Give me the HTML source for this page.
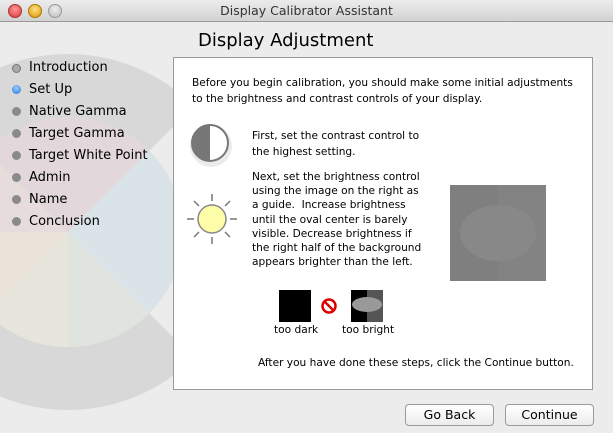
<!DOCTYPE html>
<html><head><style>
body{margin:0;width:613px;height:433px;overflow:hidden;background:#ececec;font-family:"DejaVu Sans","Liberation Sans",sans-serif;position:relative;color:#000}
.t{position:absolute;white-space:nowrap;font-size:10.6px;line-height:16px}
.nav{position:absolute;left:29px;font-size:13px;white-space:nowrap}
.dot{position:absolute;left:12px;width:9px;height:9px;border-radius:50%;background:#8a8a8a}
.btn{position:absolute;top:404px;height:20px;border:1px solid #9a9a9a;border-radius:4px;background:linear-gradient(#fff,#ececec);font-size:12.5px;text-align:center;line-height:20px}
</style></head><body>
<div style="position:absolute;left:0;top:0;width:613px;height:21px;background:linear-gradient(#ececec,#d2d2d2);border-bottom:1px solid #999"></div>
<div style="position:absolute;left:8px;top:4px;width:12px;height:12px;border-radius:50%;background:radial-gradient(circle at 50% 35%,#f99,#d33);border:1px solid #a33"></div>
<div style="position:absolute;left:28px;top:4px;width:12px;height:12px;border-radius:50%;background:radial-gradient(circle at 50% 35%,#fd8,#d90);border:1px solid #a70"></div>
<div style="position:absolute;left:48px;top:4px;width:12px;height:12px;border-radius:50%;background:radial-gradient(circle at 50% 35%,#eee,#bbb);border:1px solid #999"></div>
<div style="position:absolute;left:0;width:613px;top:3px;text-align:center;font-size:12.5px;color:#333">Display Calibrator Assistant</div>
<svg style="position:absolute;left:0;top:22px" width="613" height="411">
<g transform="translate(68,210)">
<path d="M0,0 L125.9,-125.9 A178,178 0 1 0 125.9,125.9 Z" fill="#d8d8d8"/>
<path d="M0,0 L81.3,-81.3 A115,115 0 0 0 0,-115 A115,115 0 0 0 -81.3,-81.3Z" fill="#e2d8dc"/>
<path d="M0,0 L-81.3,-81.3 A115,115 0 0 0 -115,0 A115,115 0 0 0 -81.3,81.3Z" fill="#e6dcdc"/>
<path d="M0,0 L-81.3,81.3 A115,115 0 0 0 0,115Z" fill="#e6e6dc"/>
<path d="M0,0 L0,115 A115,115 0 0 0 81.3,81.3Z" fill="#e0e4df"/>
<path d="M0,0 L81.3,81.3 A115,115 0 0 0 115,0 A115,115 0 0 0 81.3,-81.3Z" fill="#d9e3e8"/>
<path d="M-115,0 A115,115 0 0 0 -81.3,81.3 L0,0Z" fill="#eae4da"/>
</g></svg>
<div class="dot" style="top:64px;background:#aaa;border:1px solid #777;width:7px;height:7px"></div><div class="nav" style="top:60px">Introduction</div>
<div class="dot" style="top:85px;background:radial-gradient(circle at 50% 35%,#9cf,#27d)"></div><div class="nav" style="top:82px">Set Up</div>
<div class="dot" style="top:107px"></div><div class="nav" style="top:104px">Native Gamma</div>
<div class="dot" style="top:129px"></div><div class="nav" style="top:126px">Target Gamma</div>
<div class="dot" style="top:151px"></div><div class="nav" style="top:148px">Target White Point</div>
<div class="dot" style="top:173px"></div><div class="nav" style="top:170px">Admin</div>
<div class="dot" style="top:195px"></div><div class="nav" style="top:192px">Name</div>
<div class="dot" style="top:217px"></div><div class="nav" style="top:214px">Conclusion</div>
<div style="position:absolute;left:198px;top:30px;font-size:18px">Display Adjustment</div>
<div style="position:absolute;left:173px;top:57px;width:418px;height:331px;background:#fff;border:1px solid #999"></div>
<div class="t" style="left:192px;top:75px">Before you begin calibration, you should make some initial adjustments</div>
<div class="t" style="left:192px;top:91px">to the brightness and contrast controls of your display.</div>
<svg style="position:absolute;left:190px;top:120px" width="50" height="52"><circle cx="21" cy="26" r="21" fill="#ccc" opacity=".4"/><circle cx="20" cy="23" r="18" fill="#fff"/><path d="M20,5 A18,18 0 0 0 20,41Z" fill="#777"/><circle cx="20" cy="23" r="18" fill="none" stroke="#777" stroke-width="2"/></svg>
<div class="t" style="left:252px;top:128px">First, set the contrast control to<br>the highest setting.</div>
<svg style="position:absolute;left:186px;top:193px" width="52" height="52" stroke="#777" stroke-width="1.5"><g transform="translate(26,26)"><line x1="0" y1="-25" x2="0" y2="-18"/><line x1="0" y1="25" x2="0" y2="18"/><line x1="-25" y1="0" x2="-18" y2="0"/><line x1="25" y1="0" x2="18" y2="0"/><line x1="-18" y1="-18" x2="-13" y2="-13"/><line x1="18" y1="18" x2="13" y2="13"/><line x1="-18" y1="18" x2="-13" y2="13"/><line x1="18" y1="-18" x2="13" y2="-13"/><circle r="14" fill="#fdfca8" stroke="#888"/></g></svg>
<div class="t" style="left:252px;top:170px;line-height:14.2px">Next, set the brightness control<br>using the image on the right as<br>a guide.&nbsp; Increase brightness<br>until the oval center is barely<br>visible. Decrease brightness if<br>the right half of the background<br>appears brighter than the left.</div>
<div style="position:absolute;left:450px;top:185px;width:96px;height:96px;background:linear-gradient(90deg,#7f7f7f 50%,#838383 50%)"></div>
<div style="position:absolute;left:460px;top:205px;width:76px;height:56px;border-radius:50%;background:#888"></div>
<div style="position:absolute;left:279px;top:290px;width:32px;height:32px;background:#000"></div>
<svg style="position:absolute;left:320px;top:297px" width="18" height="18"><circle cx="9" cy="9" r="6.5" fill="none" stroke="#d00" stroke-width="2.5"/><line x1="4.5" y1="4.5" x2="13.5" y2="13.5" stroke="#d00" stroke-width="2.5"/></svg>
<div style="position:absolute;left:351px;top:290px;width:32px;height:32px;background:linear-gradient(90deg,#000 50%,#555 50%)"></div>
<div style="position:absolute;left:352px;top:297px;width:30px;height:15px;border-radius:50%;background:#999"></div>
<div class="t" style="left:274px;top:322px">too dark</div>
<div class="t" style="left:342px;top:322px">too bright</div>
<div class="t" style="left:258px;top:355px">After you have done these steps, click the Continue button.</div>
<div class="btn" style="left:405px;width:87px">Go Back</div>
<div class="btn" style="left:505px;width:87px">Continue</div>
</body></html>
